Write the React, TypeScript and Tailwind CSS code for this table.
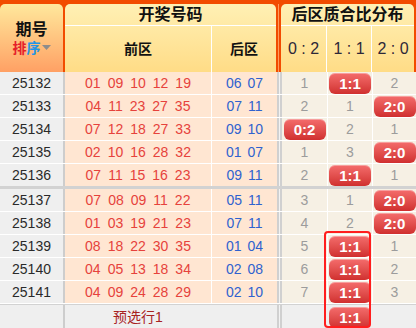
import React from "react";

type Row = { id: string; front: string[]; back: string[]; dist: (string | number)[]; sep?: boolean };

const rows: Row[] = [
  { id: "25132", front: ["01", "09", "10", "12", "19"], back: ["06", "07"], dist: [1, "1:1", 2] },
  { id: "25133", front: ["04", "11", "23", "27", "35"], back: ["07", "11"], dist: [2, 1, "2:0"] },
  { id: "25134", front: ["07", "12", "18", "27", "33"], back: ["09", "10"], dist: ["0:2", 2, 1] },
  { id: "25135", front: ["02", "10", "16", "28", "32"], back: ["01", "07"], dist: [1, 3, "2:0"] },
  { id: "25136", front: ["07", "11", "15", "16", "23"], back: ["09", "11"], dist: [2, "1:1", 1], sep: true },
  { id: "25137", front: ["07", "08", "09", "11", "22"], back: ["05", "11"], dist: [3, 1, "2:0"] },
  { id: "25138", front: ["01", "03", "19", "21", "23"], back: ["07", "11"], dist: [4, 2, "2:0"] },
  { id: "25139", front: ["08", "18", "22", "30", "35"], back: ["01", "04"], dist: [5, "1:1", 1] },
  { id: "25140", front: ["04", "05", "13", "18", "34"], back: ["02", "08"], dist: [6, "1:1", 2] },
  { id: "25141", front: ["04", "09", "24", "28", "29"], back: ["02", "10"], dist: [7, "1:1", 3] },
];

function Badge({ text }: { text: string }) {
  return (
    <div className="w-[42px] h-[21px] rounded-[6px] bg-linear-to-b from-[#f46c6c] to-[#d02f2f] text-white font-bold text-[15px] flex items-center justify-center leading-none shadow-[inset_0_1px_0_rgba(255,255,255,0.35)]">
      {text}
    </div>
  );
}

function DistCell({ v, w }: { v: string | number; w: string }) {
  return (
    <div className={`${w} h-full bg-[#f6f0e4] flex items-center justify-center`}>
      {typeof v === "string" ? <Badge text={v} /> : <span className="text-[#9c9c9c] text-[14px]">{v}</span>}
    </div>
  );
}

export default function App() {
  return (
    <div className="relative w-[416px] h-[328px] overflow-hidden bg-white font-['Liberation_Sans','Noto_Sans_CJK_SC',sans-serif]">
      {/* header */}
      <div className="flex h-[72px] bg-[#f24b00] pt-[4px]">
        <div className="w-[63px] rounded-t-[5px] bg-linear-to-b from-[#ffe89c] to-[#ffa064] flex flex-col items-center justify-center gap-[3px]">
          <div className="text-[16px] font-bold text-[#111] leading-none">期号</div>
          <div className="flex items-center text-[14px] font-bold leading-none">
            <span className="text-[#e5202a]">排</span>
            <span className="text-[#2394e6]">序</span>
            <svg width="9" height="6" viewBox="0 0 9 6" className="ml-[1px]">
              <path d="M0 0 L9 0 L4.5 5 Z" fill="#8c8c8c" />
            </svg>
          </div>
        </div>
        <div className="w-[2px]" />
        <div className="w-[211px] rounded-t-[5px] bg-linear-to-b from-[#fff0b4] to-[#ffdc86] flex flex-col">
          <div className="h-[22px] border-b border-white flex items-center justify-center text-[16px] font-bold text-[#111] leading-none">
            开奖号码
          </div>
          <div className="flex-1 flex">
            <div className="w-[146px] flex items-center justify-center text-[14px] font-bold text-[#111]">前区</div>
            <div className="w-[1px] bg-white" />
            <div className="flex-1 flex items-center justify-center text-[14px] font-bold text-[#111]">后区</div>
          </div>
        </div>
        <div className="w-[5px] flex">
          <div className="w-[2px]" />
          <div className="w-[1px] bg-[#ff9a5a]" />
          <div className="w-[2px]" />
        </div>
        <div className="w-[133px] rounded-t-[5px] bg-linear-to-b from-[#fff0b4] to-[#ffdc86] flex flex-col">
          <div className="h-[22px] border-b border-white flex items-center justify-center text-[16px] font-bold text-[#111] leading-none whitespace-nowrap">
            后区质合比分布
          </div>
          <div className="flex-1 flex text-[16px] text-[#2e2838]">
            <div className="w-[45px] flex items-center justify-center whitespace-pre">0 : 2</div>
            <div className="w-[1px] bg-white" />
            <div className="w-[44px] flex items-center justify-center whitespace-pre">1 : 1</div>
            <div className="w-[1px] bg-white" />
            <div className="flex-1 flex items-center justify-center whitespace-pre">2 : 0</div>
          </div>
        </div>
      </div>

      {/* body */}
      {rows.map((r) => (
        <div
          key={r.id}
          className={`flex ${r.sep ? "h-[25px] border-b-[3px] border-[#d2d2d2]" : "h-[23px] border-b border-white"}`}
        >
          <div className="w-[63px] bg-[#efefef] flex items-center justify-center text-[14px] text-[#2a2a2a]">{r.id}</div>
          <div className="w-[2px] bg-[#cdcdcd]" />
          <div className="w-[146px] bg-[#ffe6d2] flex items-center justify-center gap-[7px] text-[14px] text-[#e6423c]">
            {r.front.map((n, i) => (
              <span key={i}>{n}</span>
            ))}
          </div>
          <div className="w-[1px] bg-white" />
          <div className="w-[65px] bg-[#ffe6d2] flex items-center justify-center gap-[6px] text-[14px] text-[#2f62cf]">
            {r.back.map((n, i) => (
              <span key={i}>{n}</span>
            ))}
          </div>
          <div className="w-[2px] bg-[#d0d0d0]" />
          <div className="w-[1px] bg-[#f2f2f2]" />
          <div className="w-[2px] bg-[#d0d0d0]" />
          <DistCell v={r.dist[0]} w="w-[45px]" />
          <div className="w-[1px] bg-white" />
          <DistCell v={r.dist[1]} w="w-[44px]" />
          <div className="w-[1px] bg-white" />
          <DistCell v={r.dist[2]} w="flex-1" />
        </div>
      ))}

      {/* footer */}
      <div className="flex h-[26px] border-t border-[#d2d2d2]">
        <div className="w-[63px] bg-[#efefef]" />
        <div className="w-[2px] bg-[#cdcdcd]" />
        <div className="w-[212px] bg-[#efefef] flex">
          <div className="w-[146px] flex items-center justify-center text-[14px] text-[#a8221f]">预选行1</div>
        </div>
        <div className="w-[2px] bg-[#d0d0d0]" />
        <div className="w-[1px] bg-[#f2f2f2]" />
        <div className="w-[2px] bg-[#d0d0d0]" />
        <div className="w-[45px] bg-[#efefef]" />
        <div className="w-[1px] bg-[#efefef]" />
        <div className="w-[44px] bg-[#efefef] flex items-start justify-center pt-[2px]">
          <Badge text="1:1" />
        </div>
        <div className="flex-1 bg-[#efefef]" />
      </div>

      {/* highlight outline */}
      <div className="absolute left-[324px] top-[231px] w-[47px] h-[97px] border-2 border-[#ff1e1e] rounded-[4px]" />
    </div>
  );
}
